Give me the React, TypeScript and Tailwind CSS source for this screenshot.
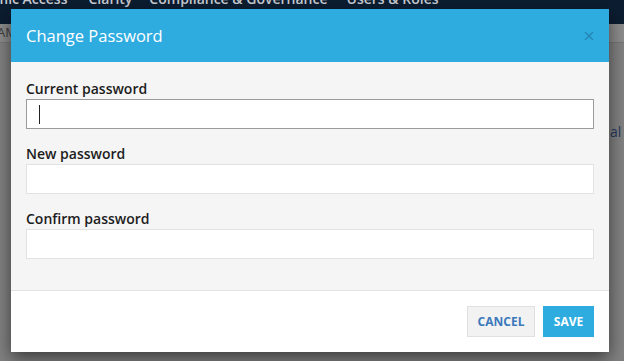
const font = { fontFamily: '"Open Sans", "Noto Sans", sans-serif' };

function Field({ label, active }: { label: string; active?: boolean }) {
  return (
    <div className="mb-[15px]">
      <label className="block text-[14px] leading-[20px] font-semibold text-[#1c1c1c]">{label}</label>
      <div
        className={
          active
            ? "flex h-[30px] w-full items-center border border-[#9b9b9b] bg-white pl-[12px]"
            : "flex h-[30px] w-full items-center border border-[#e2e2e2] bg-white pl-[12px]"
        }
      >
        {active && <span className="h-[19px] w-px bg-[#222]" />}
      </div>
    </div>
  );
}

export default function App() {
  return (
    <div className="relative h-[361px] w-[624px] overflow-hidden bg-[#818181]" style={font}>
      {/* page behind the overlay */}
      <div className="h-[24px] overflow-hidden bg-[#0c1d31]">
        <div className="-mt-[11px] flex gap-[21px] whitespace-nowrap text-[14px] leading-[20px] font-semibold text-[#c9ccd1]">
          <span className="-ml-[40px]">Dynamic Access</span>
          <span className="-mr-[4px]">Clarity</span>
          <span className="-mr-[2px]">Compliance &amp; Governance</span>
          <span>Users &amp; Roles</span>
        </div>
      </div>
      <div className="flex h-[19px] items-center border-b border-[#767676] bg-[#8c8c8c] text-[13px] text-[#3e3e3e]">
        <span className="-ml-[3px]">AMS</span>
      </div>
      <div className="flex justify-end pt-[78px] text-[14px] text-[#26375a]">
        <span className="-mr-[8px]">al v</span>
      </div>

      {/* modal */}
      <div className="absolute left-[11px] top-[9px] w-[598px] shadow-[0_6px_16px_rgba(0,0,0,0.55)]">
        <div className="flex h-[53px] items-center justify-between bg-[#2eacdf] px-[15px]">
          <h2 className="text-[16.5px] leading-[24px] text-white">Change Password</h2>
          <svg width="10" height="10" viewBox="0 0 10 10">
            <path d="M1 1L9 9M9 1L1 9" stroke="#2684b4" strokeWidth="1.3" fill="none" />
          </svg>
        </div>
        <div className="bg-[#f5f5f5] px-[15px] pt-[17px] pb-[16px]">
          <Field label="Current password" active />
          <Field label="New password" />
          <Field label="Confirm password" />
        </div>
        <div className="flex justify-end gap-[8px] border-t border-[#e4e4e4] bg-white p-[15px]">
          <button className="h-[31px] w-[68px] border border-[#e0e0e0] bg-[#f2f2f2] text-[12px] font-bold text-[#3b79bb]">
            CANCEL
          </button>
          <button className="h-[31px] w-[51px] bg-[#2eacdf] text-[12px] font-bold text-white">SAVE</button>
        </div>
      </div>
    </div>
  );
}
